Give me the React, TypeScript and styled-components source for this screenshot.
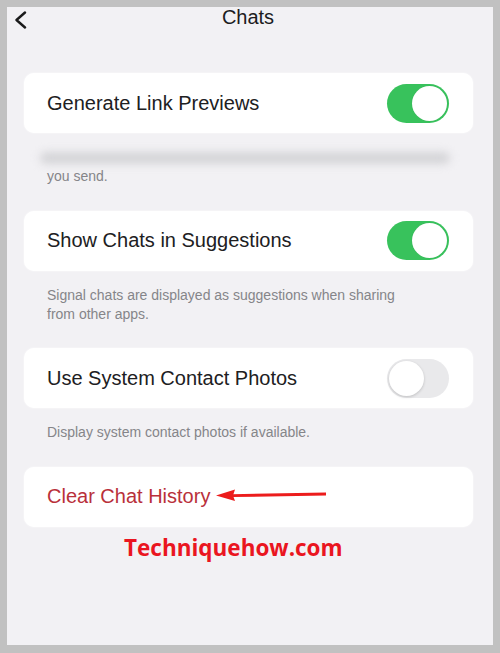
import React from "react";
import styled, { createGlobalStyle } from "styled-components";

const GlobalStyle = createGlobalStyle`
  * {
    box-sizing: border-box;
  }

  body {
    margin: 0;
    background: #c1c1c1;
    font-family: "Liberation Sans", Arial, sans-serif;
  }
`;

type Setting = {
  label: string;
  on: boolean;
  footer: () => React.ReactNode;
};

const settings: Setting[] = [
  {
    label: "Generate Link Previews",
    on: true,
    footer: () => (
      <>
        <BlurLine />
        <span>you send.</span>
      </>
    ),
  },
  {
    label: "Show Chats in Suggestions",
    on: true,
    footer: () => (
      <span>
        Signal chats are displayed as suggestions when sharing
        <br />
        from other apps.
      </span>
    ),
  },
  {
    label: "Use System Contact Photos",
    on: false,
    footer: () => <span>Display system contact photos if available.</span>,
  },
];

const App = () => {
  return (
    <>
      <GlobalStyle />
      <Frame>
        <Screen>
          <Header>
            <BackBtn>
              <svg width="16" height="18" viewBox="0 0 16 18" fill="none">
                <path
                  d="M12 1.5 L3.5 9 L12 16.5"
                  stroke="#1a1a1a"
                  strokeWidth="2.4"
                  strokeLinecap="round"
                  strokeLinejoin="round"
                />
              </svg>
            </BackBtn>
            <Title>Chats</Title>
            <span />
          </Header>

          <Content>
            {settings.map((item) => (
              <Section key={item.label}>
                <Card>
                  <Label>{item.label}</Label>
                  <Toggle $on={item.on}>
                    <Knob $on={item.on} />
                  </Toggle>
                </Card>
                <Footer>{item.footer()}</Footer>
              </Section>
            ))}

            <Card>
              <DangerLabel>Clear Chat History</DangerLabel>
              <Arrow width="112" height="14" viewBox="0 0 112 14">
                <path d="M16 6.2 L110 4.6 L110 7.6 L16 9 Z" fill="#ec1c1c" />
                <path d="M0 7.5 L19 1.5 L17 7.5 L19 13 Z" fill="#ec1c1c" />
              </Arrow>
            </Card>

            <Watermark>Techniquehow.com</Watermark>
          </Content>
        </Screen>
      </Frame>
    </>
  );
};

export default App;

const Frame = styled.div`
  width: 500px;
  height: 653px;
  padding: 7px 7px 8px 7px;
`;

const Screen = styled.div`
  height: 100%;
  background: #f2f1f4;
  display: flex;
  flex-direction: column;
  overflow: hidden;
`;

const Header = styled.div`
  height: 22px;
  display: grid;
  grid-template-columns: 60px 1fr 60px;
  align-items: center;
  margin-top: -1px;
`;

const BackBtn = styled.div`
  padding: 4px 0 0 6px;
  display: flex;
  align-items: center;
`;

const Title = styled.div`
  text-align: center;
  font-size: 20px;
  font-weight: 500;
  color: #1c1c1e;
  margin-left: -4px;
`;

const Content = styled.div`
  padding: 45px 20px 0 17px;
  display: flex;
  flex-direction: column;
`;

const Section = styled.div`
  display: flex;
  flex-direction: column;
`;

const Card = styled.div`
  height: 60px;
  background: #ffffff;
  border-radius: 10px;
  display: flex;
  align-items: center;
  justify-content: space-between;
  padding: 0 24px 0 23px;
  box-shadow: 0 0 2px rgba(255, 255, 255, 0.9);
`;

const Label = styled.span`
  font-size: 20px;
  color: #202022;
`;

const DangerLabel = styled(Label)`
  color: #b9303a;
`;

const Arrow = styled.svg`
  margin-right: auto;
  margin-left: 6px;
  margin-top: -4px;
`;

const Toggle = styled.div<{ $on: boolean }>`
  width: 62px;
  height: 39px;
  border-radius: 20px;
  background: ${({ $on }) => ($on ? "#38c25c" : "#e9e9eb")};
  display: flex;
  align-items: center;
  justify-content: ${({ $on }) => ($on ? "flex-end" : "flex-start")};
  padding: 2px;
`;

const Knob = styled.div<{ $on: boolean }>`
  width: 35px;
  height: 35px;
  border-radius: 50%;
  background: #ffffff;
  box-shadow: ${({ $on }) =>
    $on ? "0 0 1px rgba(0,0,0,0.15)" : "0 1px 3px rgba(0, 0, 0, 0.18)"};
`;

const Footer = styled.div`
  padding: 15px 0 24.5px 23px;
  font-size: 14px;
  line-height: 19px;
  color: #858589;
  display: flex;
  flex-direction: column;
`;

const BlurLine = styled.div`
  height: 19px;
  margin-left: -7px;
  width: 410px;
  display: flex;
  align-items: center;

  &::before {
    content: "";
    display: block;
    width: 100%;
    height: 12px;
    border-radius: 6px;
    background: #d4d4d7;
    filter: blur(4px);
  }
`;

const Watermark = styled.div`
  padding: 5px 0 0 100px;
  font-family: "Open Sans", "DejaVu Sans", sans-serif;
  font-weight: 700;
  font-size: 22.5px;
  color: #ea1520;
`;
